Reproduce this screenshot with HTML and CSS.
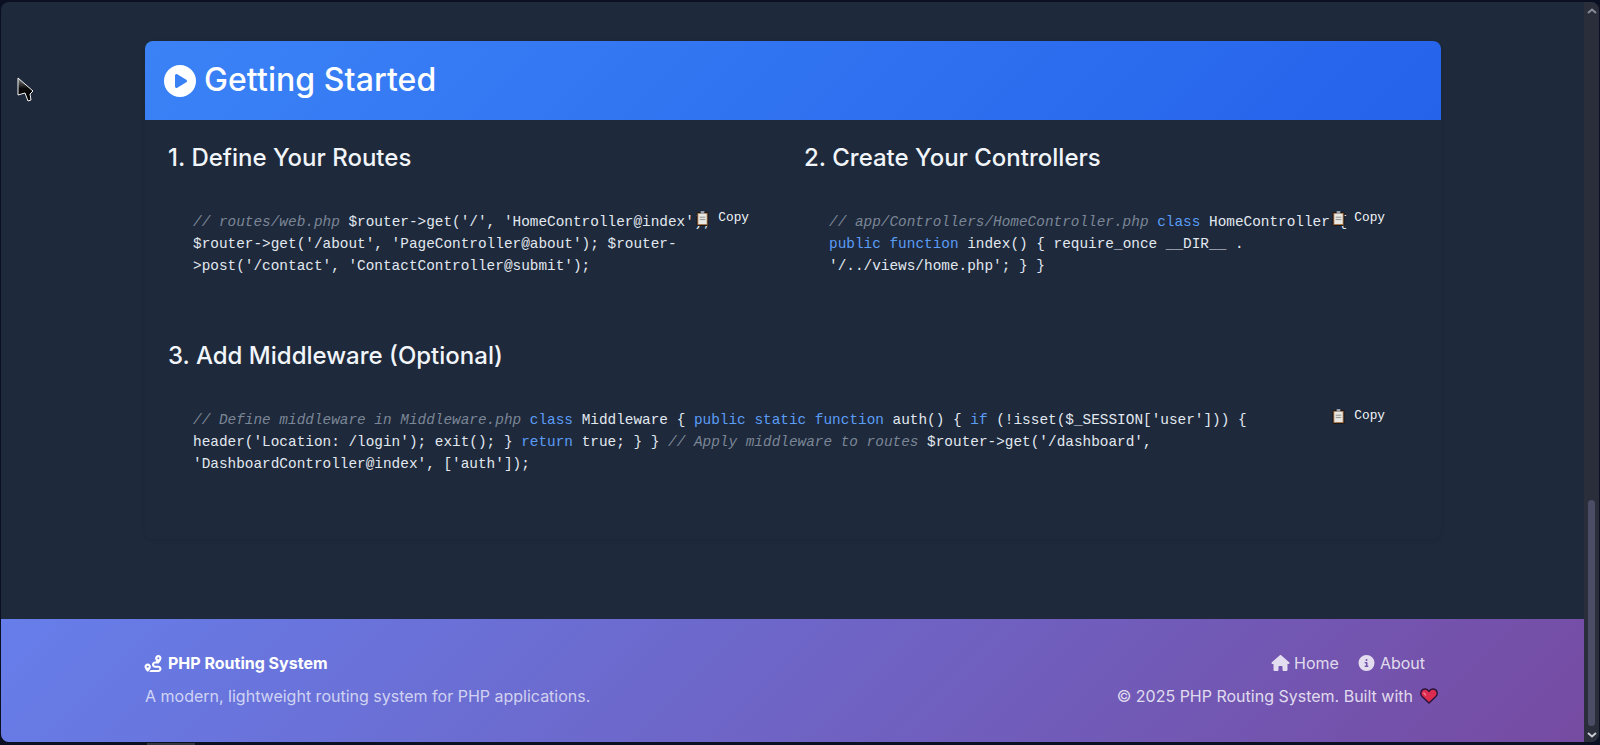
FILE: index.html
```html
<!DOCTYPE html>
<html lang="en">
<head>
<meta charset="utf-8">
<title>PHP Routing System</title>
<link rel="stylesheet" href="styles.css">
</head>
<body>
<div class="window">
  <div class="page">
    <main class="main">
      <section class="card">
        <header class="card-head">
          <svg class="play" viewBox="0 0 512 512"><path fill="currentColor" d="M0 256a256 256 0 1 1 512 0A256 256 0 1 1 0 256zM188.3 147.1c-7.6 4.2-12.3 12.3-12.3 20.9V344c0 8.7 4.7 16.7 12.3 20.9s16.8 4.1 24.3-.5l144-88c7.1-4.4 11.5-12.1 11.5-20.5s-4.4-16.1-11.5-20.5l-144-88c-7.4-4.5-16.7-4.7-24.3-.5z"/></svg>
          <h2 class="card-title">Getting Started</h2>
        </header>
        <div class="card-body">
          <article class="step">
            <h3 class="step-title">1. Define Your Routes</h3>
            <div class="code">
              <button class="copy"><svg class="clip" viewBox="0 0 14 16"><rect x="1" y="1.5" width="12" height="14" rx="1" fill="#a9764a" stroke="#111" stroke-width="1"/><rect x="2.5" y="3" width="9" height="11" fill="#e9e9e4"/><rect x="4" y="6" width="6" height="1.2" fill="#999"/><rect x="4" y="8.5" width="6" height="1.2" fill="#999"/><rect x="5" y="0" width="4" height="3" fill="#9ca3af"/></svg><span>Copy</span></button>
              <code class="code-text"><span class="cm">// routes/web.php</span> $router-&gt;get('/', 'HomeController@index'); $router-&gt;get('/about', 'PageController@about'); $router-&gt;post('/contact', 'ContactController@submit');</code>
            </div>
          </article>
          <article class="step">
            <h3 class="step-title">2. Create Your Controllers</h3>
            <div class="code">
              <button class="copy"><svg class="clip" viewBox="0 0 14 16"><rect x="1" y="1.5" width="12" height="14" rx="1" fill="#a9764a" stroke="#111" stroke-width="1"/><rect x="2.5" y="3" width="9" height="11" fill="#e9e9e4"/><rect x="4" y="6" width="6" height="1.2" fill="#999"/><rect x="4" y="8.5" width="6" height="1.2" fill="#999"/><rect x="5" y="0" width="4" height="3" fill="#9ca3af"/></svg><span>Copy</span></button>
              <code class="code-text"><span class="cm">// app/Controllers/HomeController.php</span> <span class="kw">class</span> HomeController { <span class="kw">public</span> <span class="kw">function</span> index() { require_once __DIR__ . '/../views/home.php'; } }</code>
            </div>
          </article>
          <article class="step step-wide">
            <h3 class="step-title">3. Add Middleware (Optional)</h3>
            <div class="code">
              <button class="copy"><svg class="clip" viewBox="0 0 14 16"><rect x="1" y="1.5" width="12" height="14" rx="1" fill="#a9764a" stroke="#111" stroke-width="1"/><rect x="2.5" y="3" width="9" height="11" fill="#e9e9e4"/><rect x="4" y="6" width="6" height="1.2" fill="#999"/><rect x="4" y="8.5" width="6" height="1.2" fill="#999"/><rect x="5" y="0" width="4" height="3" fill="#9ca3af"/></svg><span>Copy</span></button>
              <code class="code-text"><span class="cm">// Define middleware in Middleware.php</span> <span class="kw">class</span> Middleware { <span class="kw">public</span> <span class="kw">static</span> <span class="kw">function</span> auth() { <span class="kw">if</span> (!isset($_SESSION['user'])) { header('Location: /login'); exit(); } <span class="kw">return</span> true; } } <span class="cm">// Apply middleware to routes</span> $router-&gt;get('/dashboard', 'DashboardController@index', ['auth']);</code>
            </div>
          </article>
        </div>
      </section>
    </main>
    <footer class="footer">
      <div class="footer-inner">
        <div class="footer-left">
          <div class="brand">
            <svg class="route" viewBox="0 0 512 512"><path fill="currentColor" d="M512 96c0 50.2-59.1 125.1-84.6 155c-3.8 4.4-9.4 6.1-14.5 5H320c-17.7 0-32 14.3-32 32s14.3 32 32 32h96c53 0 96 43 96 96s-43 96-96 96H139.6c8.7-9.9 19.3-22.6 30-36.8c6.3-8.4 12.8-17.6 19-27.2H416c17.7 0 32-14.3 32-32s-14.3-32-32-32H320c-53 0-96-43-96-96s43-96 96-96h39.8c-21-31.5-39.8-67.7-39.8-96c0-53 43-96 96-96s96 43 96 96zM117.1 489.1c-3.8 4.3-7.2 8.1-10.1 11.3l-1.8 2-.2-.2c-6 4.6-14.6 4-20-1.8C59.8 473 0 402.5 0 352c0-53 43-96 96-96s96 43 96 96c0 30-21.1 67-43.5 97.9c-10.7 14.7-21.7 28-30.8 38.5l-.6 .7zM128 352a32 32 0 1 0 -64 0 32 32 0 1 0 64 0zM416 128a32 32 0 1 0 0-64 32 32 0 1 0 0 64z"/></svg>
            <span>PHP Routing System</span>
          </div>
          <p class="tagline">A modern, lightweight routing system for PHP applications.</p>
        </div>
        <div class="footer-right">
          <nav class="links">
            <a class="link" href="#"><svg class="house" viewBox="0 0 576 512"><path fill="currentColor" d="M575.8 255.5c0 18-15 32.1-32 32.1h-32l.7 160.2c0 2.7-.2 5.4-.5 8.1V472c0 22.1-17.9 40-40 40H456c-1.1 0-2.2 0-3.3-.1c-1.4 .1-2.8 .1-4.2 .1H416 392c-22.1 0-40-17.9-40-40V448 384c0-17.7-14.3-32-32-32H256c-17.7 0-32 14.3-32 32v64 24c0 22.1-17.9 40-40 40H160 128.1c-1.5 0-3-.1-4.5-.2c-1.2 .1-2.4 .2-3.6 .2H104c-22.1 0-40-17.9-40-40V360c0-.9 0-1.9 .1-2.8V287.6H32c-18 0-32-14-32-32.1c0-9 3-17 10-24L266.4 8c7-7 15-8 22-8s15 2 21 7L564.8 231.5c8 7 12 15 11 24z"/></svg>Home</a>
            <a class="link" href="#"><svg class="info" viewBox="0 0 512 512"><path fill="currentColor" d="M256 512A256 256 0 1 0 256 0a256 256 0 1 0 0 512zM216 336h24V272H216c-13.3 0-24-10.7-24-24s10.7-24 24-24h48c13.3 0 24 10.7 24 24v88h8c13.3 0 24 10.7 24 24s-10.7 24-24 24H216c-13.3 0-24-10.7-24-24s10.7-24 24-24zm40-208a32 32 0 1 1 0 64 32 32 0 1 1 0-64z"/></svg>About</a>
          </nav>
          <p class="copyright"><span>© 2025 PHP Routing System. Built with</span><svg class="heart" viewBox="0 0 18 16"><path fill="#dc2d50" stroke="#2a1238" stroke-width="1.4" d="M9 15 2.200 8.600C-.2 6.200.6 1.600 4.400 1 6.300.7 8 1.700 9 3.300 10 1.700 11.700.7 13.600 1 17.400 1.600 18.200 6.200 15.800 8.600Z"/><path fill="none" stroke="#f27a93" stroke-width="1.200" d="M3.500 4.500 6 7.500"/></svg></p>
        </div>
      </div>
    </footer>
  </div>
  <aside class="scrollbar">
    <svg class="arrow" viewBox="0 0 10 6"><path fill="none" stroke="#8a8c99" stroke-width="2" d="M1 5 5 1.500 9 5"/></svg>
    <div class="track"><div class="thumb"></div></div>
    <svg class="arrow" viewBox="0 0 10 6"><path fill="none" stroke="#c9cad2" stroke-width="2" d="M1 1 5 4.500 9 1"/></svg>
  </aside>
</div>
<div class="hscroll"></div>
<svg class="cursor" viewBox="-1 -1 17 25"><defs><linearGradient id="cursor-fill" x1="0" y1="0" x2="0" y2="1"><stop offset="0" stop-color="#8a8a8a"/><stop offset=".45" stop-color="#0a0a0a"/><stop offset="1" stop-color="#000"/></linearGradient></defs><path fill="url(#cursor-fill)" stroke="#f4f4f4" stroke-width="1" d="M0 0V17L7 15 10 23 13 22 12 16 15 13Z"/></svg>
</body>
</html>
```
FILE: styles.css
```css
* { box-sizing: border-box; }
html, body { margin: 0; height: 745px; overflow: hidden; }
body { background: #0a0f22; position: relative; font-family: "Inter", "Liberation Sans", sans-serif; color: #f1f5f9; }
.window { display: flex; height: 740px; margin: 2px 1px 3px 1px; border-radius: 8px; overflow: hidden; background: #1e293b; }
.page { width: 1583px; flex: none; display: flex; flex-direction: column; }
.main { flex: 1; padding: 39px 144px 0; }
.card { width: 1296px; height: 498px; border-radius: 8px; box-shadow: 0 1px 4px rgba(0,0,0,.12); }
.card-head { height: 79px; display: flex; align-items: center; gap: 8px; padding: 0 19px; border-radius: 8px 8px 0 0; background: linear-gradient(135deg, #3b82f6, #2563eb); color: #fff; }
.play { width: 32px; height: 32px; flex: none; }
.card-title { margin: 0; font-size: 32px; font-weight: 500; line-height: 1.2; letter-spacing: .07px; }
.card-body { display: grid; grid-template-columns: 612px 612px; column-gap: 24px; row-gap: 40px; padding: 23px 24px 0 23px; }
.step-wide { grid-column: 1 / 3; }
.step-title { margin: 0 0 15px; font-size: 24px; line-height: 29px; font-weight: 500; color: #f1f5f9; }
.code { position: relative; padding: 24px 24px 24px 25px; font-family: "Liberation Mono", monospace; font-size: 14.4px; line-height: 22px; color: #e2e8f0; }
.code-text { font: inherit; }
.cm { color: #7b8696; font-style: italic; }
.kw { color: #5b9cf5; }
.copy { position: absolute; top: 23px; right: 31px; display: flex; align-items: center; gap: 9px; padding: 0; border: 0; background: none; font-family: "Liberation Mono", monospace; font-size: 12.8px; line-height: 16px; color: #f1f5f9; }
.clip { width: 13px; height: 15px; flex: none; }
.footer { height: 123px; flex: none; background: linear-gradient(135deg, #667eea, #764ba2); }
.footer-inner { display: flex; justify-content: space-between; width: 1296px; margin-left: 144px; padding-top: 32px; }
.brand { display: flex; align-items: center; gap: 6px; font-size: 16px; line-height: 24px; font-weight: 700; color: #fff; }
.route { width: 18px; height: 17px; margin-left: -1px; }
.tagline { margin: 9px 0 0; font-size: 16px; line-height: 24px; color: rgba(255,255,255,.7); }
.footer-right { display: flex; flex-direction: column; align-items: flex-end; }
.links { display: flex; gap: 19px; padding-right: 16px; }
.link { display: flex; align-items: center; gap: 4px; font-size: 16px; line-height: 24px; color: rgba(255,255,255,.8); text-decoration: none; }
.house { width: 19px; height: 16px; }
.info { width: 17px; height: 16px; margin-right: 1px; }
.copyright { display: flex; align-items: center; gap: 7px; margin: 9px 3px 0 0; font-size: 16px; line-height: 24px; color: rgba(255,255,255,.8); }
.heart { width: 18px; height: 16px; }
.scrollbar { flex: 1; display: flex; flex-direction: column; align-items: center; padding: 6px 0 4px; background: #2a2d3a; }
.arrow { width: 10px; height: 6px; flex: none; }
.track { flex: 1; width: 7px; display: flex; flex-direction: column; justify-content: flex-end; padding-bottom: 6px; }
.thumb { height: 226px; border-radius: 4px; background: #4b4d66; }
.hscroll { position: absolute; left: 147px; bottom: 0; width: 48px; height: 2px; background: #33353f; }
.cursor { position: absolute; left: 17px; top: 77px; width: 17px; height: 25px; }
```
